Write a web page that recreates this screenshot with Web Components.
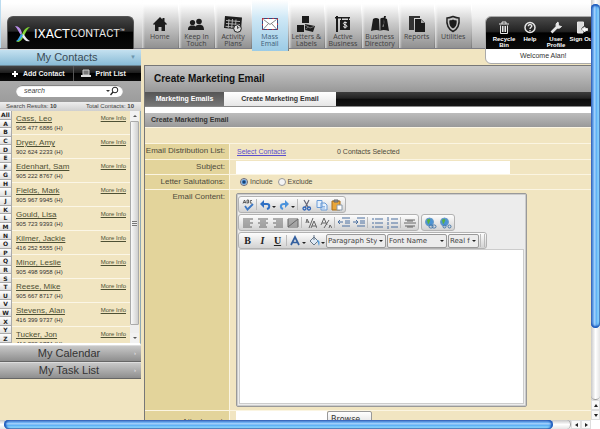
<!DOCTYPE html>
<html lang="en">
<head>
<meta charset="utf-8">
<title>Create Marketing Email</title>
<style>
html,body{margin:0;height:100%;overflow:hidden}
body{font-family:"Liberation Sans",Arial,sans-serif;font-size:8px;line-height:10px;color:#4c4a3c;
--cream:#f1e5c1;--sand:#e3d49b;--line:#fbf5e2}
</style>
</head>
<body>
<app-window>
  <app-header slot="header">
    <nav-item label="Home"><svg viewBox="0 0 16 16" width="16" height="16"><path d="M1 8 8 1l2.500 2.500V2h2v3.500L15 8l-1 1-1-.8V15H9.500v-4h-3v4H3V8.200L2 9z"/></svg></nav-item>
    <nav-item label="Keep In Touch"><svg viewBox="0 0 18 16" width="18" height="16"><circle cx="5.500" cy="6.500" r="2.600"/><circle cx="12" cy="5.500" r="2.800"/><path d="M1 14c0-3 1-4.500 4.500-4.500 2 0 2.500.5 3 1 .8-1 1.500-1.700 4-1.700C16 8.800 17 11 17 14z"/></svg></nav-item>
    <nav-item label="Activity Plans"><svg viewBox="0 0 20 18" width="20" height="18"><path d="m2 1 17 1.500-1 12-17-1.500z"/><path d="M3 5.500l14 1M3 8.500l14 1M2.500 11.300l12 1M6 4l-.8 9M9.500 4l-.8 9M13 4.500l-.6 8" stroke="#bbb" stroke-width=".9"/><circle cx="14.500" cy="13.500" r="3.800" fill="#ddd" stroke="#222"/><path d="M14.500 11v2.500l2-1.500" fill="none" stroke="#222" stroke-width=".8"/></svg></nav-item>
    <nav-item label="Mass Email" active><svg viewBox="0 0 18 16" width="18" height="16"><rect x="1.500" y="2.500" width="15" height="11" fill="#fff" stroke="#344a80"/><rect x="1.500" y="2.500" width="15" height="11" fill="none" stroke="#d33" stroke-dasharray="1.500 3.500"/><path d="m2.500 3.500 6.500 5 6.500-5M2.500 13l5-5.500M15.500 13l-5-5.500" fill="none" stroke="#555" stroke-width=".7"/></svg></nav-item>
    <nav-item label="Letters &amp; Labels"><svg viewBox="0 0 20 18" width="20" height="18"><path d="M6 1h7v7H6zM1 10h7v7H1zM9 9l10 2-2 6-8-2z"/><path d="m9 10 5 3 4-1.500M9.500 14l3-2" fill="none" stroke="#999" stroke-width=".7"/></svg></nav-item>
    <nav-item label="Active Business"><svg viewBox="0 0 18 18" width="18" height="18"><path d="M2 1h2v16H2zM1 2h15v1.500H1zM6 5h10v10H6zM7 3h1v3H7zM14 3h1v3h-1z"/><path d="M13 8c-.8-1-3.600-1-3.600.5s3.600 1 3.600 2.700-3 1.300-3.800.3M11 6.500V13.500" fill="none" stroke="#eee"/></svg></nav-item>
    <nav-item label="Business Directory"><svg viewBox="0 0 20 18" width="20" height="18"><path d="M3 4c2-1.500 4-1.500 6 0l1 12c-2-1.500-5-1.500-9 0zM10 4c2-2 4-1.500 7 0l2 12c-4-1.500-7-1.500-9 0z"/><path d="M10 4v12M15 1l-2 11" stroke="#bbb" stroke-width=".8"/><path d="m14 1 2 0-2 8-1 1z"/></svg></nav-item>
    <nav-item label="Reports"><svg viewBox="0 0 18 18" width="18" height="18"><path d="M1 1h11v2H6v12H1z" fill="#333"/><path d="M7 4h6l4 4v9H7z"/><path d="M13 4.500V8h3.500" fill="#aaa"/></svg></nav-item>
    <nav-item label="Utilities"><svg viewBox="0 0 18 18" width="18" height="18"><path d="M9 1.500c2.500 1 4 1.500 6 1.500.8 7-1 11-6 13.500C4 14 2.200 10 3 3c2 0 3.500-.5 6-1.500z" fill="#c4c4c4" stroke="#222" stroke-width="1.500"/><path d="M9 4.500c1.500.6 2 .8 3.700 1 .2 4-.7 6.500-3.700 8-3-1.500-3.900-4-3.700-8 1.700-.2 2.200-.4 3.700-1z"/></svg></nav-item>
  </app-header>
  <contact-panel slot="side"></contact-panel>
  <email-page></email-page>
</app-window>
<script>
const define=(name,markup,setup)=>{
  const t=document.createElement('template');t.innerHTML=markup;
  customElements.define(name,class extends HTMLElement{
    constructor(){super();this.attachShadow({mode:'open'}).append(t.content.cloneNode(true));}
    connectedCallback(){if(setup&&!this.ready){this.ready=true;setup(this,this.shadowRoot);}}
  });
};

define('aqua-scrollbar',`<style>
:host{display:flex;box-sizing:border-box;background:linear-gradient(#c8c8c8,#fff 50%,#e4e4e4)}
:host([vertical]){flex-direction:column;background:linear-gradient(90deg,#c8c8c8,#fff 50%,#e4e4e4)}
.track{flex:1;display:flex;padding-left:4px;border-radius:0 5px 5px 0;border-right:1px solid #999}
.thumb{width:97%;border-radius:5px;background:linear-gradient(#5573b8,#62a8f0 25%,#a3d0fb 40%,#5fb0f5 60%,#98e2ff 88%,#6a7d99);box-shadow:inset 2px 0 2px #1b56b8,inset -2px 0 2px #1b56b8}
:host([vertical]) .track{padding:4px 0 0;border:0;border-bottom:1px solid #999;border-radius:0 0 5px 5px}
:host([vertical]) .thumb{width:auto;flex:1;height:82%;background:linear-gradient(90deg,#5573b8,#62a8f0 25%,#a3d0fb 40%,#5fb0f5 60%,#98e2ff 88%,#6a7d99);box-shadow:inset 0 2px 2px #1b56b8,inset 0 -2px 2px #1b56b8}
button{border:1px solid #ddd;background:#f8f8f8;padding:0;width:10px;display:grid;place-items:center}
:host([vertical]) button{width:auto;height:10px}
i{border:2px solid transparent;border-right:3px solid #222;border-left:0}
button+button i{border-right:0;border-left:3px solid #222}
:host([vertical]) i{border:2px solid transparent;border-bottom:3px solid #222;border-top:0}
:host([vertical]) button+button i{border-bottom:0;border-top:3px solid #222}
</style><div class="track"><div class="thumb"></div></div><button aria-label="Back"><i></i></button><button aria-label="Forward"><i></i></button>`);

define('app-window',`<style>
:host{display:grid;grid-template:minmax(0,1fr) 9px/minmax(0,1fr) 9px;height:100vh}
.view{position:relative;overflow:hidden;background:var(--cream);display:grid;grid-template:49px minmax(0,1fr)/141px minmax(0,1fr)}
.head{grid-column:1/3}
main{padding:16px 0 0 4px;min-width:0}
.corner{background:#fff}
</style><div class="view"><div class="head"><slot name="header"></slot></div><slot name="side"></slot><main><slot></slot></main></div>
<aqua-scrollbar vertical></aqua-scrollbar><aqua-scrollbar></aqua-scrollbar><div class="corner"></div>`);

define('nav-item',`<style>
:host{display:block;flex:1;box-sizing:border-box;border-style:solid;border-width:0 1px 0 0;border-image:linear-gradient(#fff 20%,#777) 1;background:linear-gradient(90deg,#fff9,#fff0 3px)}
:host([active]){background:linear-gradient(#fff,#cfe8f6 35%,#9ccbe5);height:51px}
a{display:flex;flex-direction:column;align-items:center;padding-top:15px;color:#3f3f3f;text-decoration:none;text-align:center;font:7px/7px "Open Sans","Noto Sans",sans-serif}
.icon{height:18px;display:grid;place-items:center;fill:#1c1c1c}
span{padding:0 3px}
:host([active]) a{color:#3d5d77}
</style><a href="#"><div class="icon"><slot></slot></div><span></span></a>`,(h,r)=>{r.querySelector('span').textContent=h.getAttribute('label');});

define('brand-logo',`<style>
:host{display:flex;align-items:center;width:127px;height:33px;box-sizing:border-box;padding:2px 0 0 6px;color:#fff;border-radius:6px 6px 0 0;background:linear-gradient(#454545,#222 45%,#000 46%,#090909);border:1px solid #555;border-bottom:0}
svg{margin-right:3px}
b{font:12px/12px "DejaVu Sans",sans-serif}
span{font:11px/12px Roboto,sans-serif;color:#e6e6e6;padding-left:1px}
small{font-size:5px;line-height:6px;align-self:flex-start;padding-top:8px}
</style><svg width="17" height="18" viewBox="0 0 17 18"><path d="M1 1c4 0 6 3 7 7l-1 2C5 8 4 4 1 1z" fill="#b98ee8"/><path d="M16 2c-4 0-6 3-8 7-2 4-3 7-6 8 4 .5 6-2 8-6s3-7 6-9z" fill="#7fd437"/><path d="M9 9c2 1 3 5 7 7-4 1-6-1-8-5z" fill="#e9e9f4"/><path d="M2 16c2-1 3-4 5-7l2 1c-2 4-4 7-7 6z" fill="#3aa6e8"/></svg><b>IXACT</b><span>CONTACT</span><small>™</small>`);

define('user-menu',`<style>
:host{display:block;position:absolute;left:485px;top:16px;width:114px;background:#fff;border:1px solid #aaa;border-radius:6px;box-sizing:border-box;overflow:hidden;z-index:2}
nav{display:grid;grid-template-columns:repeat(4,26px);padding:4px 0 0 5px;height:32px;box-sizing:border-box;background:linear-gradient(#4a4a4a,#222 45%,#000 50%,#0b0b0b)}
a{color:#f2f2f2;text-decoration:none;text-align:center;font-weight:bold;font-size:6px;line-height:6px;display:flex;flex-direction:column;align-items:center;width:26px}
svg{width:12px;height:13px;margin-bottom:2px;fill:none;stroke:#e6e6e6}
a{color:#fff}
p{margin:0;padding:2px 34px 3px;font-size:7px;line-height:9px;white-space:nowrap;color:#333}
</style><nav>
<a href="#"><svg viewBox="0 0 12 13"><path d="M1 3h10M4 3V1h4v2M2.500 4.500v8h7v-8M4.500 5v6M6 5v6M7.500 5v6"/></svg>Recycle Bin</a>
<a href="#"><svg viewBox="0 0 12 13"><circle cx="6" cy="6.500" r="5" stroke-width="1.500"/><path d="M4.300 5.300c0-2.500 3.600-2.200 3.500-.2C7.700 6.400 6 6.400 6 8M6 9v1.200" stroke-width="1.300"/></svg>Help</a>
<a href="#"><svg viewBox="0 0 12 13"><path d="M1.500 11.500 7 6" stroke-width="2.600"/><path d="M8 1c-2 1-2.500 3-1.500 5s3.500 1.500 5-.5l-2.500-.5-.5-1.500z" fill="#e6e6e6"/></svg>User Profile</a>
<a href="#"><svg viewBox="0 0 12 13"><path d="M1.500 1h6v4L5 7v2l2 1v2H1.500z" fill="#ddd"/><path d="m6 8 3-2v1.500h2.500v2H9V11z" fill="#fff"/></svg>Sign Out</a>
</nav><p>Welcome Alan!</p>`);

define('app-header',`<style>
:host{display:flex;height:49px;box-sizing:border-box;border-bottom:1px solid #7d7d84;background:linear-gradient(#fff 3px,#efefef 35%,#aaa)}
.brand{width:142px;padding:16px 0 0 6px;box-sizing:border-box;border-left:1px solid #bcdcf0}
nav{display:flex;width:330px;background:linear-gradient(#fff 4px,#c9c9c9 50%,#919191)}
</style><div class="brand"><brand-logo></brand-logo></div><nav><slot></slot></nav><user-menu></user-menu>`);

define('side-bar-title',`<style>
:host{display:block}
button{display:flex;width:100%;align-items:center;border:0;border-top:1px solid #ddd;border-bottom:1px solid #666;padding:0 5px 0 4px;font:11px/15px "Liberation Sans",sans-serif;color:#333;background:linear-gradient(#c8c8c8,#8e8e8e)}
:host([open]) button{background:linear-gradient(#c4e1f0,#89bbd6);color:#3a4b56;border-bottom-color:#6c8796}
span{flex:1;text-align:center}
i{font-style:normal;font-size:6px;color:#eee}
:host([open]) i{color:#6d96ae}
</style><button><span><slot></slot></span><i></i></button>`,(h,r)=>{r.querySelector('i').textContent=h.hasAttribute('open')?'▼':'›';});

define('contact-row',`<style>
:host{display:grid;grid-template-columns:1fr auto;height:24px;box-sizing:border-box;border-bottom:1px solid #fbf6e6;padding:3px 4px 0;align-content:start}
a{color:#4d5034}
.n{font-size:8px;line-height:10px}
.m{font-size:6px;line-height:9px}
span{font-size:6px;line-height:8px;color:#333}
</style><a class="n" href="#"></a><a class="m" href="#">More Info</a><span></span>`,(h,r)=>{r.querySelector('.n').textContent=h.getAttribute('name');r.querySelector('span').textContent=h.getAttribute('phone');});

define('alpha-index',`<style>
:host{display:flex;flex-direction:column;width:12px}
button{flex:1;min-height:0;border:1px solid #aaa;border-width:0 1px 1px 0;padding:0;background:linear-gradient(#fff,#dfdfdf);font:bold 6px/7px "DejaVu Sans",sans-serif;color:#222}
button:first-child{background:var(--cream)}
</style>`,(h,r)=>{for(const c of ['All',...'ABCDEFGHIJKLMNOPQRSTUVWXYZ']){const b=document.createElement('button');b.textContent=c;r.append(b);}});

define('contact-panel',`<style>
:host{display:flex;flex-direction:column;align-self:start;font-size:7px}
.acts{display:flex;background:linear-gradient(#444,#1d1d1d 45%,#000 50%,#0c0c0c)}
.acts button{display:flex;align-items:center;gap:5px;flex:1;height:15px;border:0;background:none;padding:0 0 0 7px;color:#f2f2f2;font:bold 7px/15px "Liberation Sans",sans-serif}
.acts button:first-child{border-right:1px solid #555;padding-left:12px}
form{display:flex;align-items:center;height:12px;margin:0;background:#fff;border-radius:7px;padding:0 4px 0 8px;box-shadow:inset 0 1px 1px #777}
.search{padding:4px 18px 5px 16px;background:linear-gradient(#aaa,#9c9c9c)}
input{flex:1;min-width:0;border:0;background:none;outline:0;padding:0;font:italic 7px/12px "Liberation Sans",sans-serif;color:#333}
input::placeholder{color:#444;opacity:1}
form button{display:flex;border:0;background:none;padding:0}
.sum{display:flex;justify-content:space-between;padding:0 7px 0 6px;font-size:6px;line-height:9px;background:linear-gradient(#eee,#cfcfcf);color:#444}
.list{display:flex;height:234px;box-sizing:border-box;border-right:1px solid #8fa9b5;border-bottom:2px solid #fff}
.rows{flex:1;overflow:hidden}
.sb{width:9px;margin-right:1px;display:flex;flex-direction:column;background:#eee}
.sb button{height:10px;border:0;background:#f2f2f2;padding:0;display:grid;place-items:center}
.sb i{border:2px solid transparent;border-top:0;border-bottom:2px solid #555}
.sb button:last-child i{border-bottom:0;border-top:2px solid #555}
.th{height:204px;border:1px solid #aaa;border-radius:1px;background:linear-gradient(90deg,#fafafa,#cfcfcf);display:grid;place-items:center;margin-bottom:auto;box-sizing:border-box}
.th::after{content:"";width:5px;height:5px;background:repeating-linear-gradient(#777 0 1px,#eee 1px 2px)}
</style>
<side-bar-title open>My Contacts</side-bar-title>
<div class="acts"><button><svg width="6" height="6"><path d="M3 0v6M0 3h6" stroke="#fff" stroke-width="2"/></svg>Add Contact</button><button><svg width="10" height="9" viewBox="0 0 10 9"><path d="M2 1h6v5H2z" fill="#777" stroke="#ccc"/><path d="M0 6h10v2H0z" fill="#ddd"/></svg>Print List</button></div>
<div class="search"><form><input aria-label="Search contacts" placeholder="search"><button type="button" aria-label="Search"><svg width="13" height="10" viewBox="0 0 13 10"><path d="M0 4h4L2 6z" fill="#333"/><circle cx="9" cy="4" r="2.800" fill="none" stroke="#222"/><path d="M7 6 4.500 9" stroke="#222" stroke-width="1.300"/></svg></button></form></div>
<div class="sum"><span>Search Results: <b>10</b></span><span>Total Contacts: <b>10</b></span></div>
<div class="list"><alpha-index></alpha-index><div class="rows"></div><div class="sb"><button aria-label="Up"><i></i></button><div class="th"></div><button aria-label="Down"><i></i></button></div></div>
<side-bar-title>My Calendar</side-bar-title><side-bar-title>My Task List</side-bar-title>`,(h,r)=>{
 const data=[['Cass, Leo','905 477 6886'],['Dryer, Amy','902 624 2233'],['Edenhart, Sam','905 222 8767'],['Fields, Mark','905 967 9945'],['Gould, Lisa','905 723 9393'],['Kilmer, Jackie','416 252 5555'],['Minor, Leslie','905 498 9958'],['Reese, Mike','905 667 8717'],['Stevens, Alan','416 399 9737'],['Tucker, Jon','416 822 6774']];
 for(const [n,p] of data){const e=document.createElement('contact-row');e.setAttribute('name',n);e.setAttribute('phone',p+' (H)');r.querySelector('.rows').append(e);}
});

define('form-row',`<style>
:host{display:grid;grid-template-columns:85px minmax(0,1fr);border-bottom:1px solid var(--line);min-height:14px}
.l{background:var(--sand);border-right:1px solid var(--line);text-align:right;padding:2px 4px 0 0;line-height:10px;white-space:nowrap}
.v{display:flex;align-items:center;padding-left:6px;min-width:0}
</style><div class="l"><slot name="label"></slot></div><div class="v"><slot></slot></div>`);

define('tool-group',`<style>
:host{display:flex;align-items:center;height:17px;box-sizing:border-box;border:1px solid #b2b2b2;border-radius:3px;background:linear-gradient(#fdfdfd,#d2d2d2);padding:0 1px}
</style><slot></slot>`);

define('rich-editor',`<style>
:host{display:flex;flex-direction:column;box-sizing:border-box;width:291px;height:214px;border:1px solid #999;border-radius:2px;box-shadow:inset 0 0 0 1px #ccc;background:#ececec;padding:2px 2px 2px 1px}
.r{display:flex;gap:2px;margin-bottom:1px}
.r.last{margin:0}
button{border:0;background:none;padding:0;width:15px;height:15px;display:grid;place-items:center;color:#222}
button.w{width:19px}
svg{display:block;fill:none;stroke:#666}
hr{width:1px;height:11px;border:0;margin:0 1px;background:#bbb}
.t{font:bold 10px/12px "Liberation Serif",serif}
select{appearance:none;box-sizing:border-box;height:14px;border:1px solid #999;border-radius:2px;padding:0 8px 0 1px;margin:0 1px 0 0;font:7px/12px "DejaVu Sans",sans-serif;color:#444;background:#ececec}
.wide{width:60px}
.narrow{width:31px}
.s{display:grid}.s>*{grid-area:1/1}.s::after{content:"";grid-area:1/1;place-self:center end;margin-right:4px;border:2px solid transparent;border-top:2px solid #222;border-bottom:0;pointer-events:none}
textarea{flex:1;resize:none;border:1px solid #ccc;background:#fff;margin:0 0 0 1px;padding:2px;outline:0;font:8px/10px "Liberation Sans",sans-serif}
.grip{width:3px;height:13px;border:1px solid #bbb;border-width:0 1px}
</style>
<div class="r"><tool-group>
<button aria-label="Spelling"><svg width="12" height="12" viewBox="0 0 12 12"><path d="M1 4.500 2.500 1 4 4.500M1.500 3.500h2M5 1v3h1.500V1zM10 1.500H8.300v2.600H10" stroke="#444" stroke-width=".8"/><path d="m3 7 2.500 3.500L11 5" stroke="#3d78c4" stroke-width="1.800"/></svg></button><hr>
<button class="w" aria-label="Undo"><svg width="16" height="12" viewBox="0 0 16 12"><path d="M2 5h5c3 0 3 4 0 5" stroke="#2f70c4" stroke-width="2"/><path d="m0 5 4-4v8z" fill="#2f70c4" stroke="none"/><path d="M12 7h4l-2 2z" fill="#222" stroke="none"/></svg></button>
<button class="w" aria-label="Redo"><svg width="16" height="12" viewBox="0 0 16 12"><path d="M7 5H5c-4 0-4 4-1 5" stroke="#4b93dc" stroke-width="2"/><path d="M10 5 6 1v8z" fill="#4b93dc" stroke="none"/><path d="M12 7h4l-2 2z" fill="#222" stroke="none"/></svg></button><hr>
<button aria-label="Cut"><svg width="12" height="12" viewBox="0 0 12 12"><path d="m3 1 4 7M8 1 4.500 8" stroke="#667" stroke-width="1.200"/><circle cx="3.500" cy="9.500" r="1.500" stroke="#2b62b8" stroke-width="1.300"/><circle cx="8" cy="9.500" r="1.500" stroke="#2b62b8" stroke-width="1.300"/></svg></button>
<button aria-label="Copy"><svg width="12" height="12" viewBox="0 0 12 12"><path d="M1 1.500h5v7H1zM5 4h4l2 2v5H5z" fill="#e5f0fc" stroke="#6a9bd6"/><path d="M6 7.500h3M6 9h3" stroke="#6a9bd6" stroke-width=".7"/></svg></button>
<button aria-label="Paste"><svg width="12" height="12" viewBox="0 0 12 12"><path d="M1 2h8v9H1z" fill="#e9a63a" stroke="#a86f1d"/><path d="M3 1h4v2H3z" fill="#999"/><path d="M6 6h5v5H6z" fill="#fff" stroke="#89a"/></svg></button>
</tool-group></div>
<div class="r"><tool-group id="align"></tool-group><tool-group>
<button aria-label="Insert link"><svg width="13" height="12" viewBox="0 0 13 12"><circle cx="5.500" cy="5" r="4" fill="#4c93d4" stroke="#6a9cc8"/><path d="M3 3c2-2 4-1 3 1s-1 3-2 3z" fill="#58b23c" stroke="none"/><rect x="5" y="8" width="4" height="3" rx="1.500" stroke="#47a"/><rect x="8" y="8" width="4" height="3" rx="1.500" stroke="#47a"/></svg></button>
<button aria-label="Remove link"><svg width="13" height="12" viewBox="0 0 13 12"><circle cx="5.500" cy="5" r="4" fill="#4c93d4" stroke="#6a9cc8"/><path d="M3 3c2-2 4-1 3 1s-1 3-2 3z" fill="#58b23c" stroke="none"/><rect x="4" y="8" width="3" height="3" rx="1.500" stroke="#47a"/><rect x="9" y="8" width="3" height="3" rx="1.500" stroke="#47a"/></svg></button></tool-group></div>
<div class="r last"><tool-group>
<button class="t">B</button><button class="t"><i>I</i></button><button class="t"><u>U</u></button><hr>
<button class="w" aria-label="Text colour"><svg width="16" height="12" viewBox="0 0 16 12"><path d="M1 10 5 2l4 8M2.500 7.500h5" stroke="#335f9f" stroke-width="1.700"/><path d="M12 7h4l-2 2z" fill="#222" stroke="none"/></svg></button>
<button class="w" aria-label="Fill colour"><svg width="16" height="12" viewBox="0 0 16 12"><path d="m1 6 4-4 4 4-4 4zM5 0v5" fill="#dfeaf5" stroke="#678"/><path d="M8 5c3 0 3 3 2 6-1-2-1-4-2-6" fill="#58a0dd" stroke="none"/><path d="M12 7h4l-2 2z" fill="#222" stroke="none"/></svg></button>
<span class="s"><select class="wide" aria-label="Paragraph style"><option>Paragraph Style</option></select></span><span class="s"><select class="wide" aria-label="Font name"><option>Font Name</option></select></span><span class="s"><select class="narrow" aria-label="Font size"><option>Real font size</option></select></span><span class="grip"></span>
</tool-group></div>
<textarea aria-label="Email content"></textarea>`,(h,r)=>{
 const icons=[['Align left','M1 2h10M1 4h7M1 6h10M1 8h7M1 10h9'],['Center','M1 2h10M3 4h6M1 6h10M3 8h6M2 10h8'],['Align right','M1 2h10M4 4h7M1 6h10M4 8h7M2 10h9'],['No alignment','M1 2h10v8H1zM1 4h10M1 6h10M1 8h10M1 10 11 2'],0,['Lowercase','M1 6l1-4 2 4M2 5h2M6 11 9 4l3 7M7 9h4M4 11 8 1'],['Uppercase','M1 8 4 1l3 7M2 6h4M9 11l1-3 2 3M4 11 9 3'],0,['Indent','M4 1h8M7 4h5M7 6h5M4 9h8M0 5h5M2 3 0 5l2 2'],['Outdent','M4 1h8M7 4h5M7 6h5M4 9h8M0 5h5M3 3l2 2-2 2'],0,['Bullets','M4 2h8M4 6h8M4 10h8M1 2h2M1 6h2M1 10h2'],['Numbering','M5 2h7M5 6h7M5 10h7M2 0v4M2 5v3M2 9v3'],0,['Rule','M1 3h10M1 9h10M0 6h12M3 4h6M3 10h6']];
 r.querySelector('#align').innerHTML=icons.map(i=>i?'<button aria-label="'+i[0]+'"><svg width="12" height="12" viewBox="0 0 12 12"><path style="stroke:'+(/Bul|Num|dent/.test(i[0])?'#4a6f9f':'#666')+'" d="'+i[1]+'"/></svg></button>':'<hr>').join('');
});

define('email-page',`<style>
:host{display:block;border:1px solid #777;border-width:1px 0 0 1px;margin-left:-1px;font-size:8px}
h1{margin:0;font-size:10px;line-height:26px;padding-left:9px;color:#111;background:linear-gradient(#c8c8c8,#989898)}
nav{display:flex;background:linear-gradient(#3d3d3d,#222 45%,#0c0c0c 50%,#151515);border-bottom:1px solid #888}
nav a{font-weight:bold;font-size:7px;line-height:14px;text-decoration:none;color:#fff;background:linear-gradient(#555,#777);width:79px;text-align:center}
nav a+a{width:112px;color:#333;background:linear-gradient(#fff,#e6e6e6)}
h2{margin:0;font-size:7px;line-height:14px;padding-left:6px;color:#333;background:linear-gradient(#bcbcbc,#999);border-top:6px solid #fff;border-bottom:1px solid var(--line)}
.gap{height:15px;border-bottom:1px solid var(--line)}
form-row>a{color:#5a4fcf;font-size:7px}
.n{font-size:7px}
.dist{min-height:16px;box-sizing:border-box}
.dist a{padding-left:1px;width:100px}
.text{border:0;outline:0;background:#fff;padding:0 3px;height:13px;width:274px;box-sizing:border-box;font:8px/12px "Liberation Sans",sans-serif}
.radio{display:flex;align-items:center;gap:2px;font-size:7px;margin:0 5px 0 0}
.radio input{margin:0 0 0 4px;width:8px;height:8px;appearance:none;border:1px solid #999;border-radius:50%;background:#f4f4f4;box-sizing:border-box}
.radio+.radio input{margin-left:0}
.radio input:checked{background:radial-gradient(#183f70 0 1px,#4d94d8 2px,#dceafa 3px);border-color:#667}
.ed{padding:3px 0}
.up{display:flex;align-items:start}
.up input{width:91px}
.up button{width:45px;height:16px;border:1px solid #999;border-radius:2px;padding:0;background:linear-gradient(#fff,#dcdcdc);font:8px/13px "DejaVu Sans",sans-serif;color:#333}
.att{display:block;padding-top:4px}
</style>
<h1>Create Marketing Email</h1>
<nav><a href="#">Marketing Emails</a><a href="#">Create Marketing Email</a></nav>
<h2>Create Marketing Email</h2><div class="gap"></div>
<form-row class="dist"><span slot="label">Email Distribution List:</span><a href="#">Select Contacts</a><span class="n">0 Contacts Selected</span></form-row>
<form-row><label slot="label" for="subject">Subject:</label><input class="text" id="subject"></form-row>
<form-row><span slot="label">Letter Salutations:</span><label class="radio"><input type="radio" name="sal" checked>Include</label><label class="radio"><input type="radio" name="sal">Exclude</label></form-row>
<form-row><span slot="label">Email Content:</span><div class="ed"><rich-editor></rich-editor></div></form-row>
<form-row><label class="att" slot="label" for="file">Attachment:</label><div class="up"><input class="text" id="file"><button>Browse...</button></div></form-row>`);
</script>
</body>
</html>
